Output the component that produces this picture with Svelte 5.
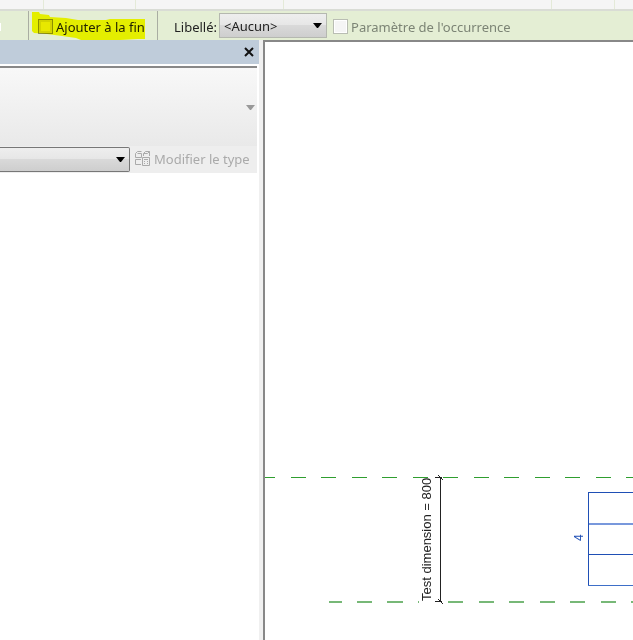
<script lang="ts">
	let append = $state(false);
	let instanceParam = $state(false);
	let label = $state('<Aucun>');

	const ribbonPanels = [43, 91, 147, 267, 62];

	// x positions of the dashes on the two reference planes
	const topDashes = Array.from({ length: 40 }, (_, i) => -5 + Math.round(i * 30.5));
	const bottomDashes = Array.from({ length: 36 }, (_, i) => 183 + Math.round(i * 30.5));
</script>

<div class="app">
	<div class="ribbon">
		{#each ribbonPanels as width}
			<div class="ribbon-panel" style="width: {width}px"></div>
		{/each}
	</div>

	<div class="options">
		<div class="option-group option-group--first"><span class="field-end"></span></div>
		<div class="option-group option-group--append">
			<label class="check">
				<input type="checkbox" bind:checked={append} />
				<span>Ajouter à la fin</span>
			</label>
			<svg class="marker" width="116" height="30" aria-hidden="true">
				<path
					d="M0 1 L7 1 L8 3 L17 4 L18 6 L34 7 L46 9 L74 9 L78 8 H113 V28 L106 28 L88 29 H49 L44 27 L30 25 L15 23 L2 22 L0 20 Z"
				/>
			</svg>
		</div>
		<div class="option-group option-group--label">
			<label for="param-label">Libellé:</label>
			<div class="combo">
				<select id="param-label" bind:value={label}>
					<option value="<Aucun>">&lt;Aucun&gt;</option>
				</select>
				<svg class="arrow" width="9" height="5" aria-hidden="true"><path d="M0 0H9L5 5H4Z" /></svg>
			</div>
			<label class="check check--disabled">
				<input type="checkbox" bind:checked={instanceParam} disabled />
				<span>Paramètre de l'occurrence</span>
			</label>
		</div>
	</div>

	<div class="workspace">
		<aside class="palette" aria-label="Propriétés">
			<div class="palette-title">
				<button class="close" aria-label="Fermer">
					<svg width="10" height="10" viewBox="0 0 10 10" aria-hidden="true">
						<path d="M1 1L9 9M9 1L1 9" stroke="#111" stroke-width="2" fill="none" />
					</svg>
				</button>
			</div>
			<button class="type-preview" aria-label="Sélecteur de type">
				<svg width="9" height="5" aria-hidden="true"><path d="M0 0H9L5 5H4Z" fill="#999" /></svg>
			</button>
			<div class="type-row">
				<div class="combo combo--type">
					<select aria-label="Filtre">
						<option value=""></option>
					</select>
					<svg class="arrow" width="9" height="5" aria-hidden="true"><path d="M0 0H9L5 5H4Z" /></svg>
				</div>
				<button class="edit-type" disabled>
					<svg width="15" height="15" viewBox="0 0 15 15" fill="none" stroke="#aaa" aria-hidden="true">
						<path d="M.5 6.5V2.5L2.5 .5H6.5M.5 6.5H6.5V2.5H2.5" />
						<path d="M8.5 5V2.5L10.5 .5H14.5V5M8.5 2.5H12.5L14.5 .5" />
						<path d="M6 8.5H.5V13.5H6" />
						<path d="M7.5 6.5H14.5V14.5H7.5ZM9 8.5H13M9 10.5H10M12 10.5H13M9 12.5H10M12 12.5H13" />
					</svg>
					<span>Modifier le type</span>
				</button>
			</div>
			<div class="properties"></div>
		</aside>

		<div class="splitter"></div>

		<main class="view">
			<svg class="drawing" role="img" aria-label="Test dimension = 800">
				<g stroke="#2f9e2f" shape-rendering="crispEdges">
					{#each topDashes as x}
						<path d="M{x} 435.5h15" />
					{/each}
				</g>
				<g stroke="#77b877" stroke-width="2">
					<path d="M64 560h13M92 560h15M122 560h16M153 560h1" />
					{#each bottomDashes as x}
						<path d="M{x} 560h15" />
					{/each}
				</g>

				<g stroke="#222" fill="none">
					<path d="M175.5 435V560" />
					<path d="M170 435.5h7M170 559.5h7" />
					<path d="M173 433l5 5M173 557l5 5" />
				</g>
				<text class="dimension" transform="translate(166 559) rotate(-90)">Test dimension = 800</text>

				<g stroke="#1f4fb5" fill="none">
					<path d="M323.5 450V544" />
					<path d="M323 450.5H2000M323 512.5H2000" />
					<path d="M323 543.5H2000" stroke="#3e6fc8" />
					<path d="M324 482H2000" stroke="#7898dc" stroke-width="2" />
				</g>
				<text class="count" transform="translate(318 499) rotate(-90)">4</text>
			</svg>
		</main>
	</div>
</div>

<style>
	:global(body) {
		margin: 0;
		background: #fff;
	}

	.app {
		display: flex;
		flex-direction: column;
		min-height: 100vh;
		font-family: 'Noto Sans', 'Open Sans', sans-serif;
		font-size: 13px;
		line-height: 18px;
		color: #222;
	}

	button,
	select {
		font: inherit;
		color: inherit;
	}

	.ribbon {
		display: flex;
		height: 9px;
		overflow: hidden;
		background: #f5f5f5;
		border-bottom: 2px solid #d9dcd5;
	}

	.ribbon-panel {
		box-sizing: content-box;
		flex-shrink: 0;
		border-right: 1px solid #e4ead8;
	}

	.options {
		display: flex;
		height: 29px;
		overflow: hidden;
		white-space: nowrap;
		background: #e4eed4;
	}

	.option-group {
		display: flex;
		align-items: center;
		box-sizing: border-box;
		padding-top: 2px;
	}

	.option-group--first {
		width: 29px;
		border-right: 1px solid #a9ada2;
	}

	.field-end {
		width: 1px;
		height: 8px;
		background: #fff;
	}

	.option-group--append {
		position: relative;
		width: 129px;
		padding-left: 9px;
		border-right: 1px solid #a9ada2;
	}

	.marker {
		position: absolute;
		top: 0;
		left: 3px;
		fill: #ff0;
		mix-blend-mode: multiply;
		pointer-events: none;
	}

	.option-group--label {
		padding-left: 16px;
	}

	.check {
		display: flex;
		align-items: center;
		gap: 3px;
	}

	.check input {
		appearance: none;
		box-sizing: border-box;
		width: 15px;
		height: 15px;
		margin: 0;
		border: 1px solid #8c8f87;
		background: #e8e8e8;
		box-shadow: inset 0 0 0 2px #d4d4d4;
	}

	.check input:checked {
		background: #444;
	}

	.check--disabled {
		margin-left: 6px;
		color: #7c8475;
	}

	.check--disabled input {
		border-color: #b9bdb3;
		background: #f5f5f5;
		box-shadow: inset 0 0 0 1px #fff;
	}

	.combo {
		position: relative;
		width: 108px;
		height: 25px;
		margin-left: 2px;
	}

	.option-group .combo {
		margin-bottom: 2px;
	}

	.combo select {
		appearance: none;
		box-sizing: border-box;
		display: block;
		width: 100%;
		height: 100%;
		padding: 0 20px 0 4px;
		border: 1px solid #b5b8b0;
		border-radius: 0;
		background: linear-gradient(#eee, #e6e6e6 50%, #d9d9d9 50%, #cecece);
	}

	.arrow {
		position: absolute;
		top: 10px;
		right: 5px;
		pointer-events: none;
	}

	.workspace {
		display: flex;
		flex: 1;
	}

	.palette {
		display: flex;
		flex-direction: column;
		flex-shrink: 0;
		width: 259px;
	}

	.palette-title {
		display: flex;
		align-items: center;
		justify-content: flex-end;
		height: 24px;
		padding-right: 4px;
		background: #bfccda;
	}

	.close {
		display: flex;
		padding: 1px;
		border: none;
		background: none;
	}

	.type-preview {
		box-sizing: border-box;
		display: flex;
		align-items: center;
		justify-content: flex-end;
		height: 80px;
		padding: 0 2px;
		border: none;
		border-top: 2px solid #888;
		margin-top: 2px;
		margin-right: 2px;
		background: linear-gradient(#f8f8f8, #e9e9e9);
	}

	.type-row {
		display: flex;
		align-items: center;
		height: 25px;
		padding: 1px 0;
		margin-right: 2px;
		background: #eee;
	}

	.combo--type {
		width: 130px;
		margin-left: 0;
	}

	.combo--type select {
		border: 1px solid #777;
		border-left: none;
		border-radius: 0 2px 2px 0;
	}

	.edit-type {
		display: flex;
		align-items: center;
		gap: 4px;
		padding: 0 0 2px;
		border: none;
		margin-left: 5px;
		white-space: nowrap;
		background: none;
		color: #aaa;
	}

	.properties {
		flex: 1;
		background: #fff;
	}

	.splitter {
		flex-shrink: 0;
		width: 4px;
		background: #f0f0f0;
	}

	.view {
		display: flex;
		flex: 1;
		min-width: 0;
		border-top: 2px solid #888;
		border-left: 2px solid #888;
		background: #fff;
	}

	.drawing {
		display: block;
		width: 100%;
		min-height: 590px;
	}

	.dimension {
		font-family: 'Liberation Sans', Arial, sans-serif;
		font-size: 13px;
		fill: #222;
	}

	.count {
		font-family: 'Liberation Sans', Arial, sans-serif;
		font-size: 12px;
		fill: #1f4fb5;
	}
</style>
